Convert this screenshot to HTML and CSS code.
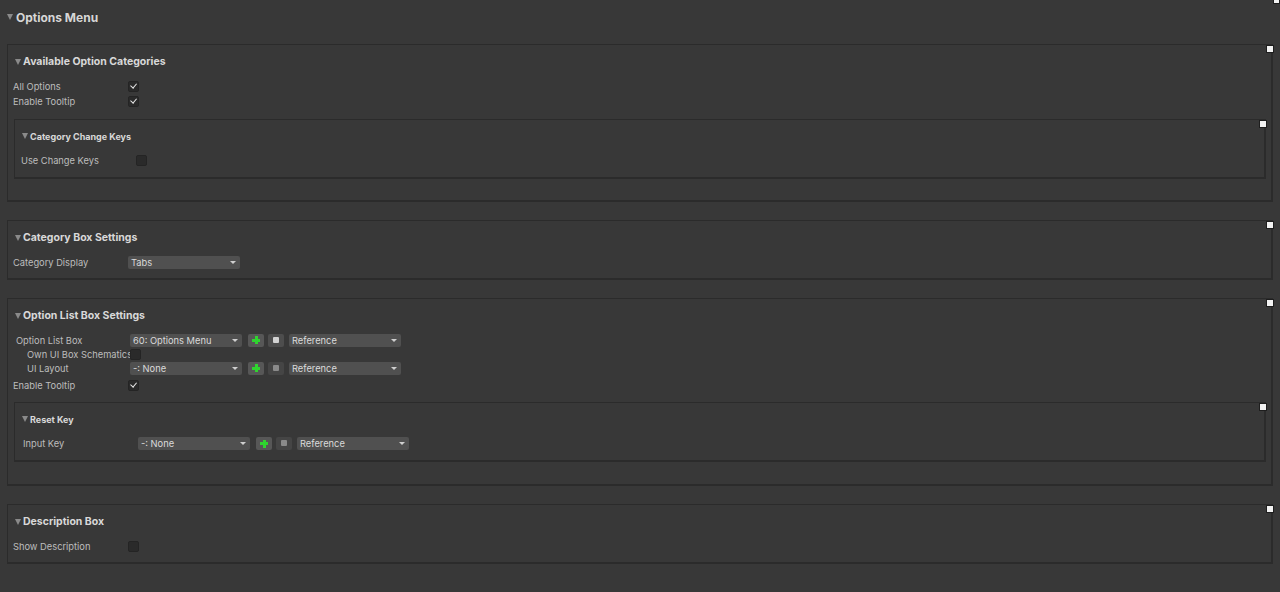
FILE: index.html
```html
<!DOCTYPE html>
<html>
<head>
<meta charset="utf-8">
<link rel="stylesheet" href="styles.css">
</head>
<body>
<div class="page">
  <span class="corner-handle"></span>
  <div class="title"><span class="tri tri-lg"></span>Options Menu</div>

  <section class="box">
    <span class="handle"></span>
    <div class="hdr"><span class="tri"></span>Available Option Categories</div>
    <div class="row"><span class="lbl">All Options</span><span class="chk on"></span></div>
    <div class="row"><span class="lbl">Enable Tooltip</span><span class="chk on"></span></div>
    <section class="box inner mt10">
      <span class="handle"></span>
      <div class="hdr sub"><span class="tri"></span>Category Change Keys</div>
      <div class="row"><span class="lbl">Use Change Keys</span><span class="chk"></span></div>
    </section>
    <div class="spacer"></div>
  </section>

  <section class="box">
    <span class="handle"></span>
    <div class="hdr"><span class="tri"></span>Category Box Settings</div>
    <div class="row"><span class="lbl">Category Display</span><span class="dd">Tabs</span></div>
  </section>

  <section class="box">
    <span class="handle"></span>
    <div class="hdr"><span class="tri"></span>Option List Box Settings</div>
    <div class="group">
      <div class="row r14"><span class="lbl w114">Option List Box</span><span class="dd">60: Options Menu</span><span class="btn plus"></span><span class="btn sq"></span><span class="dd">Reference</span></div>
      <div class="row r14"><span class="lbl w114 ind">Own UI Box Schematics</span><span class="chk"></span></div>
      <div class="row r14"><span class="lbl w114 ind">UI Layout</span><span class="dd">-: None</span><span class="btn plus"></span><span class="btn sq off"></span><span class="dd">Reference</span></div>
    </div>
    <div class="row mt3"><span class="lbl">Enable Tooltip</span><span class="chk on"></span></div>
    <section class="box inner mt9">
      <span class="handle"></span>
      <div class="hdr sub"><span class="tri"></span>Reset Key</div>
      <div class="row pl1"><span class="lbl">Input Key</span><span class="dd">-: None</span><span class="btn plus"></span><span class="btn sq off"></span><span class="dd">Reference</span></div>
    </section>
    <div class="spacer lg"></div>
  </section>

  <section class="box">
    <span class="handle"></span>
    <div class="hdr"><span class="tri"></span>Description Box</div>
    <div class="row"><span class="lbl">Show Description</span><span class="chk"></span></div>
  </section>
</div>
</body>
</html>
```

FILE: styles.css
```css
* { box-sizing: border-box; }
html, body { margin: 0; padding: 0; }
body {
  background: #383838;
  font-family: Inter, "Noto Sans", sans-serif;
  color: #c2c2c2;
  font-size: 9.3px;
  width: 1280px;
  height: 592px;
  overflow: hidden;
}
.page {
  position: relative;
  padding: 0 7px 0 7px;
  display: flex;
  flex-direction: column;
  gap: 18px;
}
.corner-handle {
  position: absolute;
  top: -3px;
  right: 0;
  width: 7px;
  height: 7px;
  background: #f2f2f2;
  border: 1px solid #1e1e1e;
}
.title {
  display: flex;
  align-items: center;
  height: 34px;
  margin-bottom: -8px;
  font-size: 12px;
  font-weight: 700;
  color: #d6d6d6;
}
.tri {
  display: inline-block;
  flex: none;
  width: 0; height: 0;
  border-left: 3.5px solid transparent;
  border-right: 3.5px solid transparent;
  border-top: 6px solid #8a8a8a;
  margin-right: 2px;
}
.tri-lg { margin-right: 3px; }
.box {
  position: relative;
  border: 1px solid #2b2b2b;
  border-right-width: 2px;
  border-bottom-width: 2px;
  padding: 8px 5px 8px 5px;
}
.box.inner {
  margin-left: 1px;
  padding: 7px 6px 9px 6px;
}
.handle {
  position: absolute;
  top: 0;
  right: -3px;
  width: 8px;
  height: 8px;
  background: #f2f2f2;
  border: 1px solid #1e1e1e;
}
.hdr {
  display: flex;
  align-items: center;
  height: 17px;
  margin: 0 0 9px 2px;
  font-size: 10.5px;
  font-weight: 700;
  color: #d8d8d8;
}
.hdr.sub {
  font-size: 9px;
  height: 18px;
  margin-left: 1px;
  margin-bottom: 8px;
}
.row {
  display: flex;
  align-items: center;
  height: 15px;
}
.row.r14 { height: 14px; }
.group { padding-left: 3px; }
.pl1 { padding-left: 2px; }
.mt3 { margin-top: 3px; }
.mt9 { margin-top: 9px; }
.mt10 { margin-top: 10px; }
.spacer { height: 13px; }
.spacer.lg { height: 14px; }
.lbl {
  width: 115px;
  flex: none;
  white-space: nowrap;
  color: #bdbdbd;
}
.lbl.w114 { width: 114px; }
.lbl.ind { padding-left: 11px; }
.chk {
  position: relative;
  flex: none;
  width: 11px;
  height: 11px;
  border-radius: 2px;
  background: #2a2a2a;
  border: 1px solid #242424;
}
.chk.on::after {
  content: "";
  position: absolute;
  left: 2.5px;
  top: 1px;
  width: 5px;
  height: 3px;
  border-left: 1.5px solid #e8e8e8;
  border-bottom: 1.5px solid #e8e8e8;
  transform: rotate(-50deg);
  transform-origin: 40% 90%;
}
.dd {
  position: relative;
  width: 112px;
  height: 13px;
  line-height: 13px;
  padding-left: 3px;
  border-radius: 2px;
  background: #505050;
  color: #dadada;
  font-size: 9.3px;
  white-space: nowrap;
  flex: none;
}
.dd::after {
  content: "";
  position: absolute;
  right: 4px;
  top: 5px;
  border-left: 3px solid transparent;
  border-right: 3px solid transparent;
  border-top: 3px solid #cfcfcf;
}
.btn {
  position: relative;
  width: 16px;
  height: 13px;
  border-radius: 2px;
  flex: none;
  background: #575757;
}
.btn.plus { margin-left: 6px; }
.btn.sq { margin-left: 4px; margin-right: 5px; background: #4d4d4d; }
.btn.sq.off { background: #454545; }
.btn.plus::before, .btn.plus::after {
  content: "";
  position: absolute;
  background: #2fd42f;
}
.btn.plus::before { left: 6.7px; top: 2.5px; width: 3px; height: 8px; }
.btn.plus::after { left: 4.2px; top: 5px; width: 8px; height: 3px; }
.btn.sq::after {
  content: "";
  position: absolute;
  left: 5px; top: 3px;
  width: 6px; height: 6px;
  border-radius: 1px;
  background: #d2d2d2;
}
.btn.sq.off::after { background: #8a8a8a; }
```
